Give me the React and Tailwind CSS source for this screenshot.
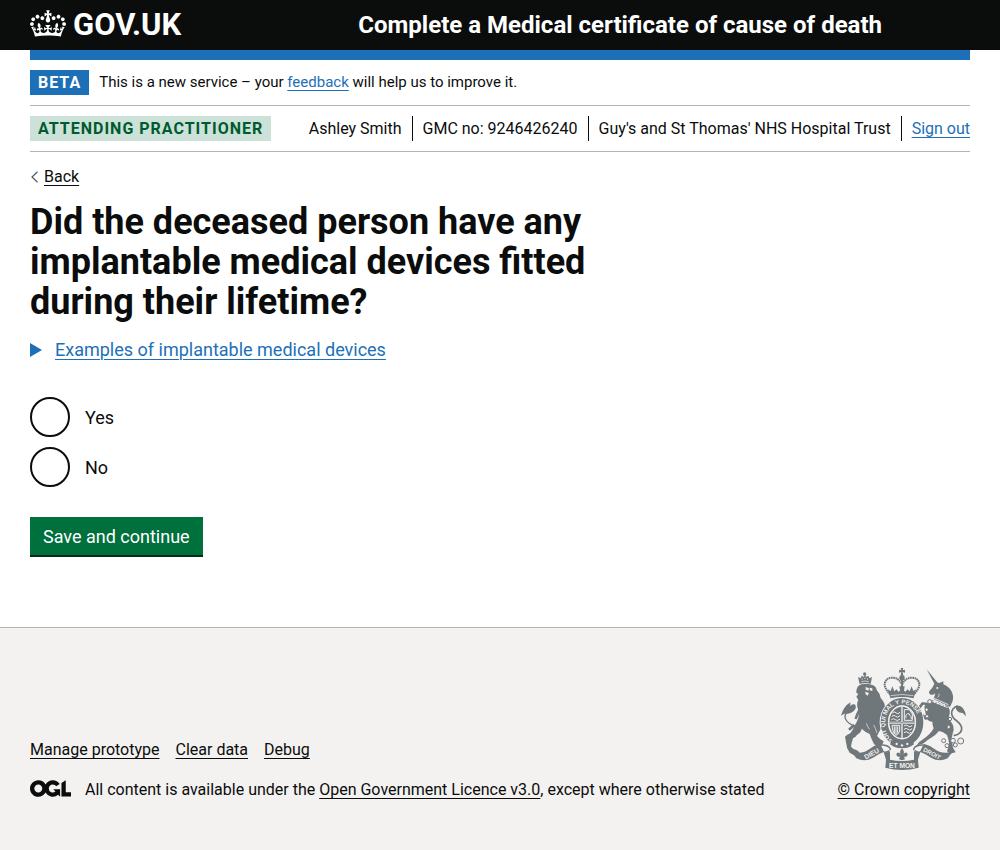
import React from "react";

const linkBase = "underline decoration-1 underline-offset-[3px] hover:decoration-[3px]";

function Crown() {
  return (
    <svg aria-hidden="true" viewBox="0 0 132 97" className="mb-[3px] h-[27px] w-9 shrink-0" fill="currentColor">
      <path
        fillRule="evenodd"
        d="M25 30.2c3.5 1.5 7.7-.2 9.1-3.7 1.5-3.6-.2-7.8-3.9-9.2-3.6-1.4-7.6.3-9.1 3.9-1.4 3.5.3 7.5 3.9 9zM9 39.5c3.6 1.5 7.8-.2 9.2-3.7 1.5-3.6-.2-7.8-3.9-9.1-3.6-1.5-7.6.2-9.1 3.8-1.4 3.5.3 7.5 3.8 9zM4.4 57.2c3.5 1.5 7.7-.2 9.1-3.8 1.5-3.6-.2-7.7-3.9-9.1-3.5-1.5-7.6.3-9.1 3.8-1.4 3.5.3 7.6 3.9 9.1zm38.3-21.4c3.5 1.5 7.7-.2 9.1-3.8 1.5-3.6-.2-7.7-3.9-9.1-3.6-1.5-7.6.3-9.1 3.8-1.3 3.6.4 7.7 3.9 9.1zm64.4-5.6c-3.6 1.5-7.8-.2-9.1-3.7-1.5-3.6.2-7.8 3.8-9.2 3.6-1.4 7.7.3 9.2 3.9 1.3 3.5-.4 7.5-3.9 9zm15.9 9.3c-3.6 1.5-7.7-.2-9.1-3.7-1.5-3.6.2-7.8 3.7-9.1 3.6-1.5 7.7.2 9.2 3.8 1.5 3.5-.3 7.5-3.8 9zm4.7 17.7c-3.6 1.5-7.8-.2-9.2-3.8-1.5-3.6.2-7.7 3.9-9.1 3.6-1.5 7.7.3 9.2 3.8 1.3 3.5-.4 7.6-3.9 9.1zM89.3 35.8c-3.6 1.5-7.8-.2-9.2-3.8-1.4-3.6.2-7.7 3.9-9.1 3.6-1.5 7.7.3 9.2 3.8 1.4 3.6-.3 7.7-3.9 9.1zM69.7 17.7l8.9 4.7V9.3l-8.9 2.8c-.2-.3-.5-.6-.9-.9L72.4 0H59.6l3.5 11.2c-.3.3-.6.5-.9.9l-8.8-2.8v13.1l8.8-4.7c.3.3.6.7.9.9l-5 15.4v.1c-.2.8-.4 1.6-.4 2.4 0 4.1 3.1 7.5 7 8.1h.2c.3 0 .7.1 1 .1.4 0 .7 0 1-.1h.2c4-.6 7.1-4.1 7.1-8.1 0-.8-.1-1.7-.4-2.4V34l-5.1-15.4c.4-.2.7-.6 1-.9zM66 92.8c16.9 0 32.8 1.1 47.1 3.2 4-16.9 8.9-26.7 14-33.5l-9.6-3.4c1 4.9 1.1 7.2 0 10.2-1.5-1.4-3-4.3-4.2-8.7L108.6 76c2.8-2 5-3.2 7.5-3.3-4.4 9.4-10 11.9-13.6 11.2-4.3-.8-6.3-4.6-5.6-7.9 1-4.7 5.7-5.9 8-.5 4.3-8.7-3-11.4-7.6-8.8 7.1-7.2 7.9-13.5 2.1-21.1-8 6.1-8.1 12.3-4.5 20.8-4.7-5.4-12.1-2.5-9.5 6.2 3.4-5.2 7.9-2 7.2 3.1-.6 4.3-6.4 7.8-13.5 7.2-10.3-.9-10.9-8-11.2-13.8 2.5-.5 7.1 1.8 11 7.3L80.2 60c-4.1 4.4-8 5.3-12.3 5.4 1.4-4.4 8-11.6 8-11.6H55.5s6.4 7.2 7.9 11.6c-4.2-.1-8-1-12.3-5.4l1.4 16.4c3.9-5.5 8.5-7.7 10.9-7.3-.3 5.8-.9 12.8-11.1 13.8-7.2.6-12.9-2.9-13.5-7.2-.7-5 3.8-8.3 7.1-3.1 2.7-8.7-4.6-11.6-9.4-6.2 3.7-8.5 3.6-14.7-4.6-20.8-5.8 7.6-5 13.9 2.2 21.1-4.7-2.6-11.9.1-7.7 8.8 2.3-5.5 7.1-4.2 8.1.5.7 3.3-1.3 7.1-5.7 7.9-3.5.7-9-1.8-13.5-11.2 2.5.1 4.7 1.3 7.5 3.3l-4.7-15.4c-1.2 4.4-2.7 7.2-4.3 8.7-1.1-3-.9-5.3 0-10.2l-9.5 3.4c5 6.9 9.9 16.7 14 33.5 14.8-2.1 30.8-3.2 47.7-3.2z"
      />
    </svg>
  );
}

function OglLogo() {
  return (
    <svg aria-hidden="true" viewBox="0 0 483.2 195.7" className="h-[17px] w-[41px] shrink-0" fill="currentColor">
      <path d="M421.5 142.8V.1l-50.7 32.3v161.1h112.4v-50.7zm-122.3-9.6A47.12 47.12 0 0 1 221 97.8c0-26 21.1-47.1 47.1-47.1 16.7 0 31.4 8.7 39.7 21.8l42.7-27.2A97.63 97.63 0 0 0 268.1 0c-36.5 0-68.3 20.1-85.1 49.7A98 98 0 0 0 97.8 0C43.9 0 0 43.9 0 97.8s43.9 97.8 97.8 97.8c36.5 0 68.3-20.1 85.1-49.7a97.76 97.76 0 0 0 149.6 25.4l19.4 22.2h3v-87.8h-80l24.3 27.5zM97.8 145c-26 0-47.1-21.1-47.1-47.1s21.1-47.1 47.1-47.1 47.1 21.1 47.1 47.1S123.8 145 97.8 145" />
    </svg>
  );
}

function RoyalArms() {
  const ink = "#6f777b";
  const paper = "#f3f2f1";
  const motto = { fill: paper, fontFamily: "'Liberation Sans', sans-serif", fontWeight: 700 };
  return (
    <svg aria-hidden="true" viewBox="36 39 375 306" className="h-[102px] w-[125px]" fill={ink}>
      {/* lion: crown, body, forearm, tail */}
      <path d="M92 87l-5-21 8 4 3-8 7 4 3-10 3 10 7-4 3 8 8-4-4 21q-16-6-33 0z" />
      <circle cx="107" cy="57" r="5" />
      <path d="M97 80q11-4 22 0" fill="none" stroke={paper} strokeWidth="2" />
      <path d="M98 72h3M106 70h3M114 72h3" stroke={paper} strokeWidth="3" />
      <path d="M92 90q16-7 38 0 12 4 13 15 10 10 12 24 12 12 14 30l-8 10-3 34 0 14q-8 14-14 26l10 10 10 6-4 10-12 4q-12 0-16-12-6-12-10-24-14-6-24-16-2 14-18 20-8 6-10 16-4 12-4 18 6 8 16 10 12 6 10 16-18 2-30-8-10-12-10-26l-4-22q6-6 16-10 8-10 12-22 8-12 12-24 4-16-2-30-4-14 2-24l-6-10 6-8-6-4q-2-6 4-18z" />
      <path d="M92 164q-8 14-12 28M150 168l14 22M148 186l14 18M76 210l-16 14" fill="none" stroke={ink} strokeWidth="8" />
      <path d="M110 96l10 4-2 7-8-3zM122 98l8 2 0 8-8-2zM108 110l12 4-4 8-6-4z" fill={paper} />
      <path d="M112 205q4 12 10 18M134 210q6 10 10 24" fill="none" stroke={paper} strokeWidth="2" />
      <path d="M54 252q32-4 32-24-4-12-20-20-16-8-18-22 0-12 16-22 14-8 10-14" fill="none" stroke={ink} strokeWidth="4" />
      <path d="M64 142q-20 12-28 40l10-6q24 2 33-14 4-10-3-14-8-2-12 6z" />

      {/* unicorn: horn, head and neck, body, tail */}
      <path d="M293 43l34 42-9 5z" />
      <path d="M317 86q8-6 14-2l12-5 0 9q16 6 24 20 8 14 4 30l-8 18-50-24 6-14q-10 4-16 0-6-4 0-12 8-8 10-14 2-4 4-6z" />
      <path d="M318 116q-4 5-11 5M330 116q2 8-4 12" fill="none" stroke={paper} strokeWidth="2" />
      <circle cx="325" cy="99" r="3" fill={paper} />
      <path d="M308 134l48 20q8 8 6 22-4 14 0 20 12 12 12 28-4 14-6 26l4 28 8 14-18 4-8-8q6-12 6-24-2-14-6-24-12-10-24-12-10 12-20 18-14 8-22 16-12 10-24 8 2-8 14-14 14-10 24-20 8-8 12-16-4-10-4-20-12 0-18-12l-6-34z" />
      <path d="M306 152q-18-8-26-6l-10 14M312 176q-12 14-22 14-6-8-12-10l-10-2" fill="none" stroke={ink} strokeWidth="8" />
      <path d="M312 128l46 21M306 137l50 21" fill="none" stroke={paper} strokeWidth="2.500" />
      <path d="M315 132l0 10 9-4 2 9 9-5 2 9 9-4 2 9" fill="none" stroke={paper} strokeWidth="3" />
      <path d="M374 242q26-4 24-24-4-14-22-26-14-16-4-30 12-16 26 0" fill="none" stroke={ink} strokeWidth="5" />
      <path d="M380 152q26-4 31 32l-10-10q-22-2-21-22z" />
      <g fill={paper} stroke={ink} strokeWidth="3">
        <circle cx="344" cy="257" r="6" />
        <circle cx="354" cy="272" r="6" />
        <circle cx="363" cy="192" r="5" />
        <circle cx="359" cy="216" r="5" />
        <circle cx="372" cy="257" r="7" />
        <circle cx="379" cy="270" r="6" />
        <circle cx="395" cy="258" r="9" />
        <circle cx="302" cy="140" r="6" />
        <circle cx="293" cy="164" r="5" />
        <circle cx="294" cy="184" r="5" />
      </g>

      {/* central crown */}
      <path d="M215 39h8l-2 7 7-2v9l-7-2 2 10h-8l2-10-7 2v-9l7 2z" />
      <circle cx="219" cy="68" r="8" />
      <path
        d="M184 119q-18-20-17-32 3-18 22-19 20 0 28 18h4q8-18 28-18 19 1 22 19 1 12-17 32"
        fill="none"
        stroke={ink}
        strokeWidth="6"
        strokeDasharray="5 1.5"
      />
      <path d="M216 74h6v30h-6z" />
      <path d="M184 130l-7-27 8 5 5-14 6 15 7-6 5 7 5-3-2-13h16l-2 13 5 3 5-7 7 6 6-15 5 14 8-5-7 27q-35-8-70 0z" />
      <path d="M185 122q34-7 68 0" fill="none" stroke={paper} strokeWidth="2" />

      {/* garter and shield */}
      <ellipse cx="219" cy="202" rx="67" ry="76" fill={paper} />
      <ellipse cx="219" cy="202" rx="53" ry="62" fill="none" stroke={ink} strokeWidth="22" />
      <ellipse cx="219" cy="202" rx="38" ry="47" />
      <ellipse cx="219" cy="202" rx="41" ry="50" fill="none" stroke={paper} strokeWidth="2" />
      <path id="garter-line" d="M192 257Q166 238 168 202Q174 148 219 146Q264 148 270 202Q272 238 246 257" fill="none" />
      <text {...motto} fontSize="18">
        <textPath href="#garter-line">SOIT QUI MAL Y PENSE</textPath>
      </text>
      <path d="M219 154v95M179 203h80" fill="none" stroke={paper} strokeWidth="6" />
      <path d="M219 154v95M179 203h80" fill="none" stroke={ink} strokeWidth="2" />
      <g fill="none" stroke={paper} strokeWidth="3">
        <path d="M190 174q6-7 12 0t11-3M188 184q7-6 12 0t13-2M187 194q7-6 12 0t14-2" />
        <path d="M189 211h23v17q-5 12-11 13-10-6-12-30zM196 214v21M201 214v25M206 214v21" />
        <path d="M226 164h15l9 13v19h-24zM231 190q-3-12 4-14t8 6q5 2 4 10" />
        <path d="M225 213q7-6 12 0t13-2M225 223q7-6 12 0t12-2M225 233q7-6 12 0t9-2" />
      </g>
      <path d="M188 254q31 25 62 0l5 14q-36 26-72 0z" />
      <g fill={paper}>
        <circle cx="203" cy="267" r="3.500" />
        <circle cx="219" cy="271" r="3.500" />
        <circle cx="235" cy="267" r="3.500" />
      </g>

      {/* ribbon and fleur-de-lis */}
      <path d="M66 290q34 8 52-6 18-14 36-18l12 24q-18 6-34 18-24 14-50 2-6-10-16-20z" />
      <path d="M372 290q-34 8-52-6-18-14-36-18l-12 24q18 6 34 18 24 14 50 2 6-10 16-20z" />
      <path d="M156 270q24 0 28 12-2 8-18 10M282 270q-24 0-28 12 2 8 18 10" fill={paper} stroke={ink} strokeWidth="4" />
      <path d="M163 288q14 8 20-2v28q36 8 72 0v-28q6 10 20 2l-8 26 2 24q-50 14-100 0l2-24z" />
      <path d="M182 284q4 8 4 26M256 284q-4 8-4 26" fill="none" stroke={paper} strokeWidth="3" />
      <path d="M187 280h64v28q-32 6-64 0z" fill={paper} />
      <path d="M219 280q10 10 3 21 4-11 11-8 7 6-2 12h-6l3 8-9 3-9-3 3-8h-6q-9-6-2-12 7-3 11 8-7-11 3-21z" />
      <text {...motto} fontSize="20" textAnchor="middle" transform="translate(131 302) rotate(-28)">
        DIEU
      </text>
      <text {...motto} fontSize="20" textAnchor="middle" x="219" y="338">
        ET MON
      </text>
      <text {...motto} fontSize="18" textAnchor="middle" transform="translate(306 301) rotate(28)">
        DROIT
      </text>
    </svg>
  );
}

function Header() {
  return (
    <header className="bg-[#0b0c0c] font-bold text-white">
      <div className="mx-auto flex h-[50px] max-w-[1020px] items-center px-[30px]">
        <a href="#home" className="flex w-1/3 items-center gap-[7px] text-[31px] leading-8">
          <Crown />
          GOV.UK
        </a>
        <a href="#service" className="pl-[15px] text-2xl leading-[30px] whitespace-nowrap">
          Complete a Medical certificate of cause of death
        </a>
      </div>
    </header>
  );
}

function Tag({ className, children }) {
  return (
    <strong className={`px-2 text-base leading-[25px] font-bold tracking-[1px] uppercase ${className}`}>
      {children}
    </strong>
  );
}

const userDetails = ["Ashley Smith", "GMC no: 9246426240", "Guy's and St Thomas' NHS Hospital Trust"];

function UserBar() {
  return (
    <div className="flex items-center justify-between border-b border-[#b1b4b6] py-2.5">
      <Tag className="bg-[#cce2d8] text-[#005a30]">Attending practitioner</Tag>
      <ul className="flex text-base leading-[25px]">
        {userDetails.map((item) => (
          <li key={item} className="mr-2.5 border-r border-[#0b0c0c] pr-2.5">
            {item}
          </li>
        ))}
        <li>
          <a href="#sign-out" className={`${linkBase} text-[#1d70b8]`}>
            Sign out
          </a>
        </li>
      </ul>
    </div>
  );
}

function Radio({ id, label }) {
  return (
    <div className="flex items-center">
      <input
        type="radio"
        id={id}
        name="devices"
        value={id}
        className="size-10 shrink-0 cursor-pointer appearance-none rounded-full border-2 border-[#0b0c0c] bg-white checked:bg-[radial-gradient(circle,#0b0c0c_0_10px,transparent_11px)]"
      />
      <label htmlFor={id} className="cursor-pointer px-[15px] text-lg leading-[25px]">
        {label}
      </label>
    </div>
  );
}

export default function App() {
  return (
    <div className="flex min-h-screen flex-col bg-[#f3f2f1] font-[Roboto,'Liberation_Sans',sans-serif] text-[#0b0c0c]">
      <Header />
      <div className="grow bg-white">
        <div className="mx-auto max-w-[1020px] px-[30px]">
          <div className="h-2.5 bg-[#1d70b8]" />
          <div className="flex items-center gap-2.5 border-b border-[#b1b4b6] py-2.5 text-[15px] leading-[25px]">
            <Tag className="bg-[#1d70b8] text-white">Beta</Tag>
            <span>
              This is a new service – your{" "}
              <a href="#feedback" className={`${linkBase} text-[#1d70b8]`}>
                feedback
              </a>{" "}
              will help us to improve it.
            </span>
          </div>
          <UserBar />
          <a href="#back" className="mt-[15px] flex w-fit items-center gap-[5px] text-base leading-5">
            <svg aria-hidden="true" viewBox="0 0 9 12" className="h-3 w-[9px]" fill="none" stroke="#505a5f" strokeWidth="1.2">
              <path d="M7.500 .8L2 6l5.500 5.200" />
            </svg>
            <span className={linkBase}>Back</span>
          </a>
          <main className="mt-[15px] pb-[70px]">
            <form onSubmit={(event) => event.preventDefault()}>
              <fieldset>
                <legend className="max-w-[620px] text-4xl leading-10 font-bold">
                  Did the deceased person have any implantable medical devices fitted during their lifetime?
                </legend>
                <details className="mt-[15px]">
                  <summary className="flex w-fit cursor-pointer list-none items-center gap-[13px] text-lg leading-[25px] text-[#1d70b8]">
                    <svg aria-hidden="true" viewBox="0 0 12 14" className="h-3.5 w-3" fill="currentColor">
                      <path d="M0 0l12 7-12 7z" />
                    </svg>
                    <span className={linkBase}>Examples of implantable medical devices</span>
                  </summary>
                </details>
                <div className="mt-[35px] flex flex-col gap-2.5">
                  <Radio id="yes" label="Yes" />
                  <Radio id="no" label="No" />
                </div>
              </fieldset>
              <button
                type="submit"
                className="mt-[30px] block cursor-pointer border-b-2 border-[#002d18] bg-[#00703c] px-[13px] pt-[7px] pb-[6px] text-lg leading-[25px] text-white"
              >
                Save and continue
              </button>
            </form>
          </main>
        </div>
      </div>
      <footer className="border-t border-[#b1b4b6]">
        <div className="mx-auto flex max-w-[1020px] items-end justify-between px-[30px] pt-10 pb-[50px] text-base leading-5">
          <div>
            <ul className="mb-5 flex gap-4">
              {["Manage prototype", "Clear data", "Debug"].map((item) => (
                <li key={item}>
                  <a href="#footer" className={linkBase}>
                    {item}
                  </a>
                </li>
              ))}
            </ul>
            <div className="flex items-start gap-[14px]">
              <OglLogo />
              <span>
                All content is available under the{" "}
                <a href="#licence" className={linkBase}>
                  Open Government Licence v3.0
                </a>
                , except where otherwise stated
              </span>
            </div>
          </div>
          <a href="#copyright" className={`${linkBase} flex flex-col items-center gap-2.5 whitespace-nowrap`}>
            <RoyalArms />
            © Crown copyright
          </a>
        </div>
      </footer>
    </div>
  );
}
